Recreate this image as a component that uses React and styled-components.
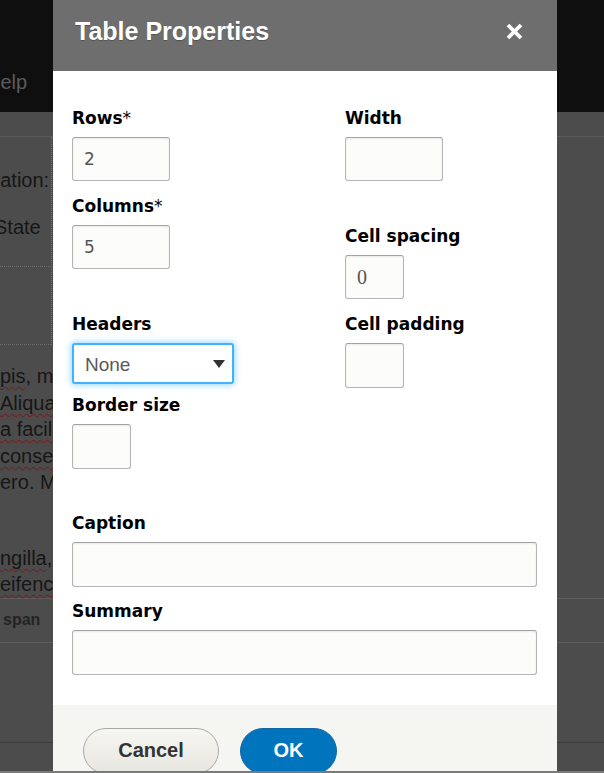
import React from 'react'
import styled, { createGlobalStyle } from 'styled-components'

const GlobalStyle = createGlobalStyle`
  html, body {
    margin: 0;
    padding: 0;
    height: 773px;
    overflow: hidden;
    background: #4c4c4c;
  }
  * { box-sizing: border-box; }
`;

const Page = styled.div`
  position: relative;
  height: 773px;
  overflow: hidden;
  font-family: "Liberation Sans", Arial, sans-serif;
  background: #4c4c4c;
`;

const TopBar = styled.div`
  height: 112px;
  background: #0f0f0f;
  color: #5c5c5c;
  font-size: 20px;
  line-height: 23px;
  padding-top: 71px;
  white-space: nowrap;
  span { margin-left: -14px; }
`;

const Strip = styled.div`
  height: 25px;
  border-bottom: 1px solid #5a5a5a;
`;

const BgTable = styled.div`
  width: 52px;
  border-right: 1px dotted #6c6c6c;
`;

const BgRow = styled.div`
  height: ${p => p.h}px;
  padding-top: ${p => p.pad || 0}px;
  border-bottom: 1px dotted #6c6c6c;
  color: #161616;
  font-size: 20px;
  line-height: 47px;
  white-space: nowrap;
`;

const BgCellText = styled.div`
  margin-left: ${p => p.shift}px;
`;

const Para = styled.div`
  margin-top: ${p => p.top}px;
  color: #161616;
  font-size: 20px;
  line-height: 26.5px;
  white-space: nowrap;
`;

const Spell = styled.span`
  text-decoration: underline wavy #7d1515;
  text-decoration-thickness: 1px;
  text-underline-offset: 3px;
  text-decoration-skip-ink: none;
`;

const SpanRow = styled.div`
  height: 45px;
  border-top: 1px solid #5e5e5e;
  border-bottom: 1px solid #5e5e5e;
  padding-left: 3px;
  color: #232323;
  font-size: 16px;
  font-weight: bold;
  line-height: 42px;
`;

const Spacer = styled.div`
  height: 100px;
  border-bottom: 1px solid #3c3c3c;
`;

const BottomEdge = styled.div`
  position: absolute;
  left: 0;
  right: 0;
  bottom: 0;
  height: 2px;
  background: #7a7a7a;
  z-index: 5;
`;

/* dialog */

const Dialog = styled.div`
  position: absolute;
  top: 0;
  left: 53px;
  width: 504px;
  bottom: 0;
  display: flex;
  flex-direction: column;
  background: #fff;
`;

const Header = styled.div`
  height: 71px;
  flex: none;
  background: #6e6e6e;
  display: flex;
  align-items: center;
  justify-content: space-between;
  padding: 0 33px 9px 22px;
`;

const Title = styled.h1`
  margin: 0;
  color: #fff;
  font-family: "Liberation Sans", Arial, sans-serif;
  font-size: 25px;
  font-weight: bold;
  line-height: 30px;
  text-shadow: 0 1px 1px rgba(0, 0, 0, 0.25);
`;

const CloseButton = styled.button`
  border: 0;
  padding: 0;
  background: none;
  width: 19px;
  height: 19px;
  display: flex;
  cursor: pointer;
`;

const Body = styled.div`
  flex: none;
  padding: 37px 20px 30px 19px;
`;

const Columns = styled.div`
  display: grid;
  grid-template-columns: 273px 1fr;
  align-items: start;
`;

const Column = styled.div`
  display: flex;
  flex-direction: column;
`;

const FieldBox = styled.div`
  display: flex;
  flex-direction: column;
  align-items: flex-start;
  margin-top: ${p => p.top || 0}px;
`;

const Label = styled.label`
  font-family: "DejaVu Sans", Verdana, sans-serif;
  font-size: 17px;
  font-weight: bold;
  line-height: 20px;
  color: #000;
  margin-bottom: 9px;
  small {
    font-size: 17px;
    font-weight: normal;
  }
`;

const TextInput = styled.input`
  width: ${p => p.w};
  height: ${p => p.h || 44}px;
  margin: 0;
  padding: 0 11px;
  border: 1px solid #b4b4b4;
  border-top-color: #a2a2a2;
  border-radius: 3px;
  background: #fcfcfa;
  box-shadow: inset 0 1px 2px rgba(0, 0, 0, 0.08);
  color: #555;
  font-family: ${p => (p.serif ? '"Liberation Serif", "Times New Roman", serif' : '"DejaVu Sans", Verdana, sans-serif')};
  font-size: ${p => (p.serif ? 20 : 17)}px;
  outline: none;
`;

const SelectWrap = styled.div`
  position: relative;
  width: 162px;
  height: 41px;
`;

const Select = styled.select`
  appearance: none;
  width: 100%;
  height: 100%;
  margin: 0;
  padding: 2px 30px 0 11px;
  border: 2px solid #3fb3fd;
  border-radius: 3px;
  background: #fff;
  box-shadow: 0 0 6px 1px rgba(64, 180, 255, 0.55);
  color: #595959;
  font-family: "Liberation Sans", Arial, sans-serif;
  font-size: 19px;
  outline: none;
`;

const Caret = styled.span`
  position: absolute;
  right: 9px;
  top: 17px;
  width: 0;
  height: 0;
  border-left: 6px solid transparent;
  border-right: 6px solid transparent;
  border-top: 8px solid #333;
  pointer-events: none;
`;

const Footer = styled.div`
  flex: 1;
  background: #f5f5f2;
  display: flex;
  align-items: flex-start;
  gap: 21px;
  padding: 23px 0 0 30px;
`;

const Button = styled.button`
  height: 46px;
  width: ${p => p.w}px;
  border-radius: 23px;
  padding: 0 0 2px;
  font-family: "Liberation Sans", Arial, sans-serif;
  font-size: 20px;
  font-weight: bold;
  cursor: pointer;
  border: 1px solid ${p => (p.primary ? '#1467a6' : '#a8a8a8')};
  background: ${p => (p.primary ? '#0074bd' : 'linear-gradient(#f6f6f2, #e8e6df)')};
  color: ${p => (p.primary ? '#fff' : '#333')};
`;

const Field = ({ label, required, top, children }) => (
  <FieldBox top={top}>
    <Label>
      {label}
      {required && <small>*</small>}
    </Label>
    {children}
  </FieldBox>
)

const App = () => {
  return (
    <Page>
      <GlobalStyle />
      <TopBar><span>Help</span></TopBar>
      <Strip />
      <BgTable>
        <BgRow h={130} pad={20}>
          <BgCellText shift={-32}>Location:</BgCellText>
          <BgCellText shift={-6}>State</BgCellText>
        </BgRow>
        <BgRow h={78} />
      </BgTable>
      <Para top={18}>
        <div><Spell>pis</Spell>, mauris vitae</div>
        <div><Spell>Aliqua</Spell>m erat volutpat</div>
        <div><Spell>a facili</Spell>sis nunc</div>
        <div><Spell>conse</Spell>quat massa</div>
        <div>ero. Mauris</div>
      </Para>
      <Para top={49}>
        <div><Spell>ngilla</Spell>, nulla</div>
        <div><Spell>eifenc</Spell> tempus</div>
      </Para>
      <SpanRow>span</SpanRow>
      <Spacer />

      <Dialog role="dialog" aria-label="Table Properties">
        <Header>
          <Title>Table Properties</Title>
          <CloseButton aria-label="Close">
            <svg width="19" height="19" viewBox="0 0 19 19">
              <path d="M3 3L16 16M16 3L3 16" stroke="#fff" strokeWidth="3.8" fill="none" />
            </svg>
          </CloseButton>
        </Header>
        <Body>
          <Columns>
            <Column>
              <Field label="Rows" required>
                <TextInput w="98px" defaultValue="2" />
              </Field>
              <Field label="Columns" required top={15}>
                <TextInput w="98px" defaultValue="5" />
              </Field>
              <Field label="Headers" top={45}>
                <SelectWrap>
                  <Select defaultValue="none">
                    <option value="none">None</option>
                    <option value="row">First row</option>
                    <option value="col">First column</option>
                    <option value="both">Both</option>
                  </Select>
                  <Caret />
                </SelectWrap>
              </Field>
              <Field label="Border size" top={11}>
                <TextInput w="59px" h={45} />
              </Field>
            </Column>
            <Column>
              <Field label="Width">
                <TextInput w="98px" />
              </Field>
              <Field label="Cell spacing" top={45}>
                <TextInput w="59px" serif defaultValue="0" />
              </Field>
              <Field label="Cell padding" top={15}>
                <TextInput w="59px" h={45} />
              </Field>
            </Column>
          </Columns>
          <Field label="Caption" top={44}>
            <TextInput w="465px" h={45} />
          </Field>
          <Field label="Summary" top={14}>
            <TextInput w="465px" h={45} />
          </Field>
        </Body>
        <Footer>
          <Button w={136}>Cancel</Button>
          <Button w={97} primary>OK</Button>
        </Footer>
      </Dialog>
      <BottomEdge />
    </Page>
  )
}

export default App
